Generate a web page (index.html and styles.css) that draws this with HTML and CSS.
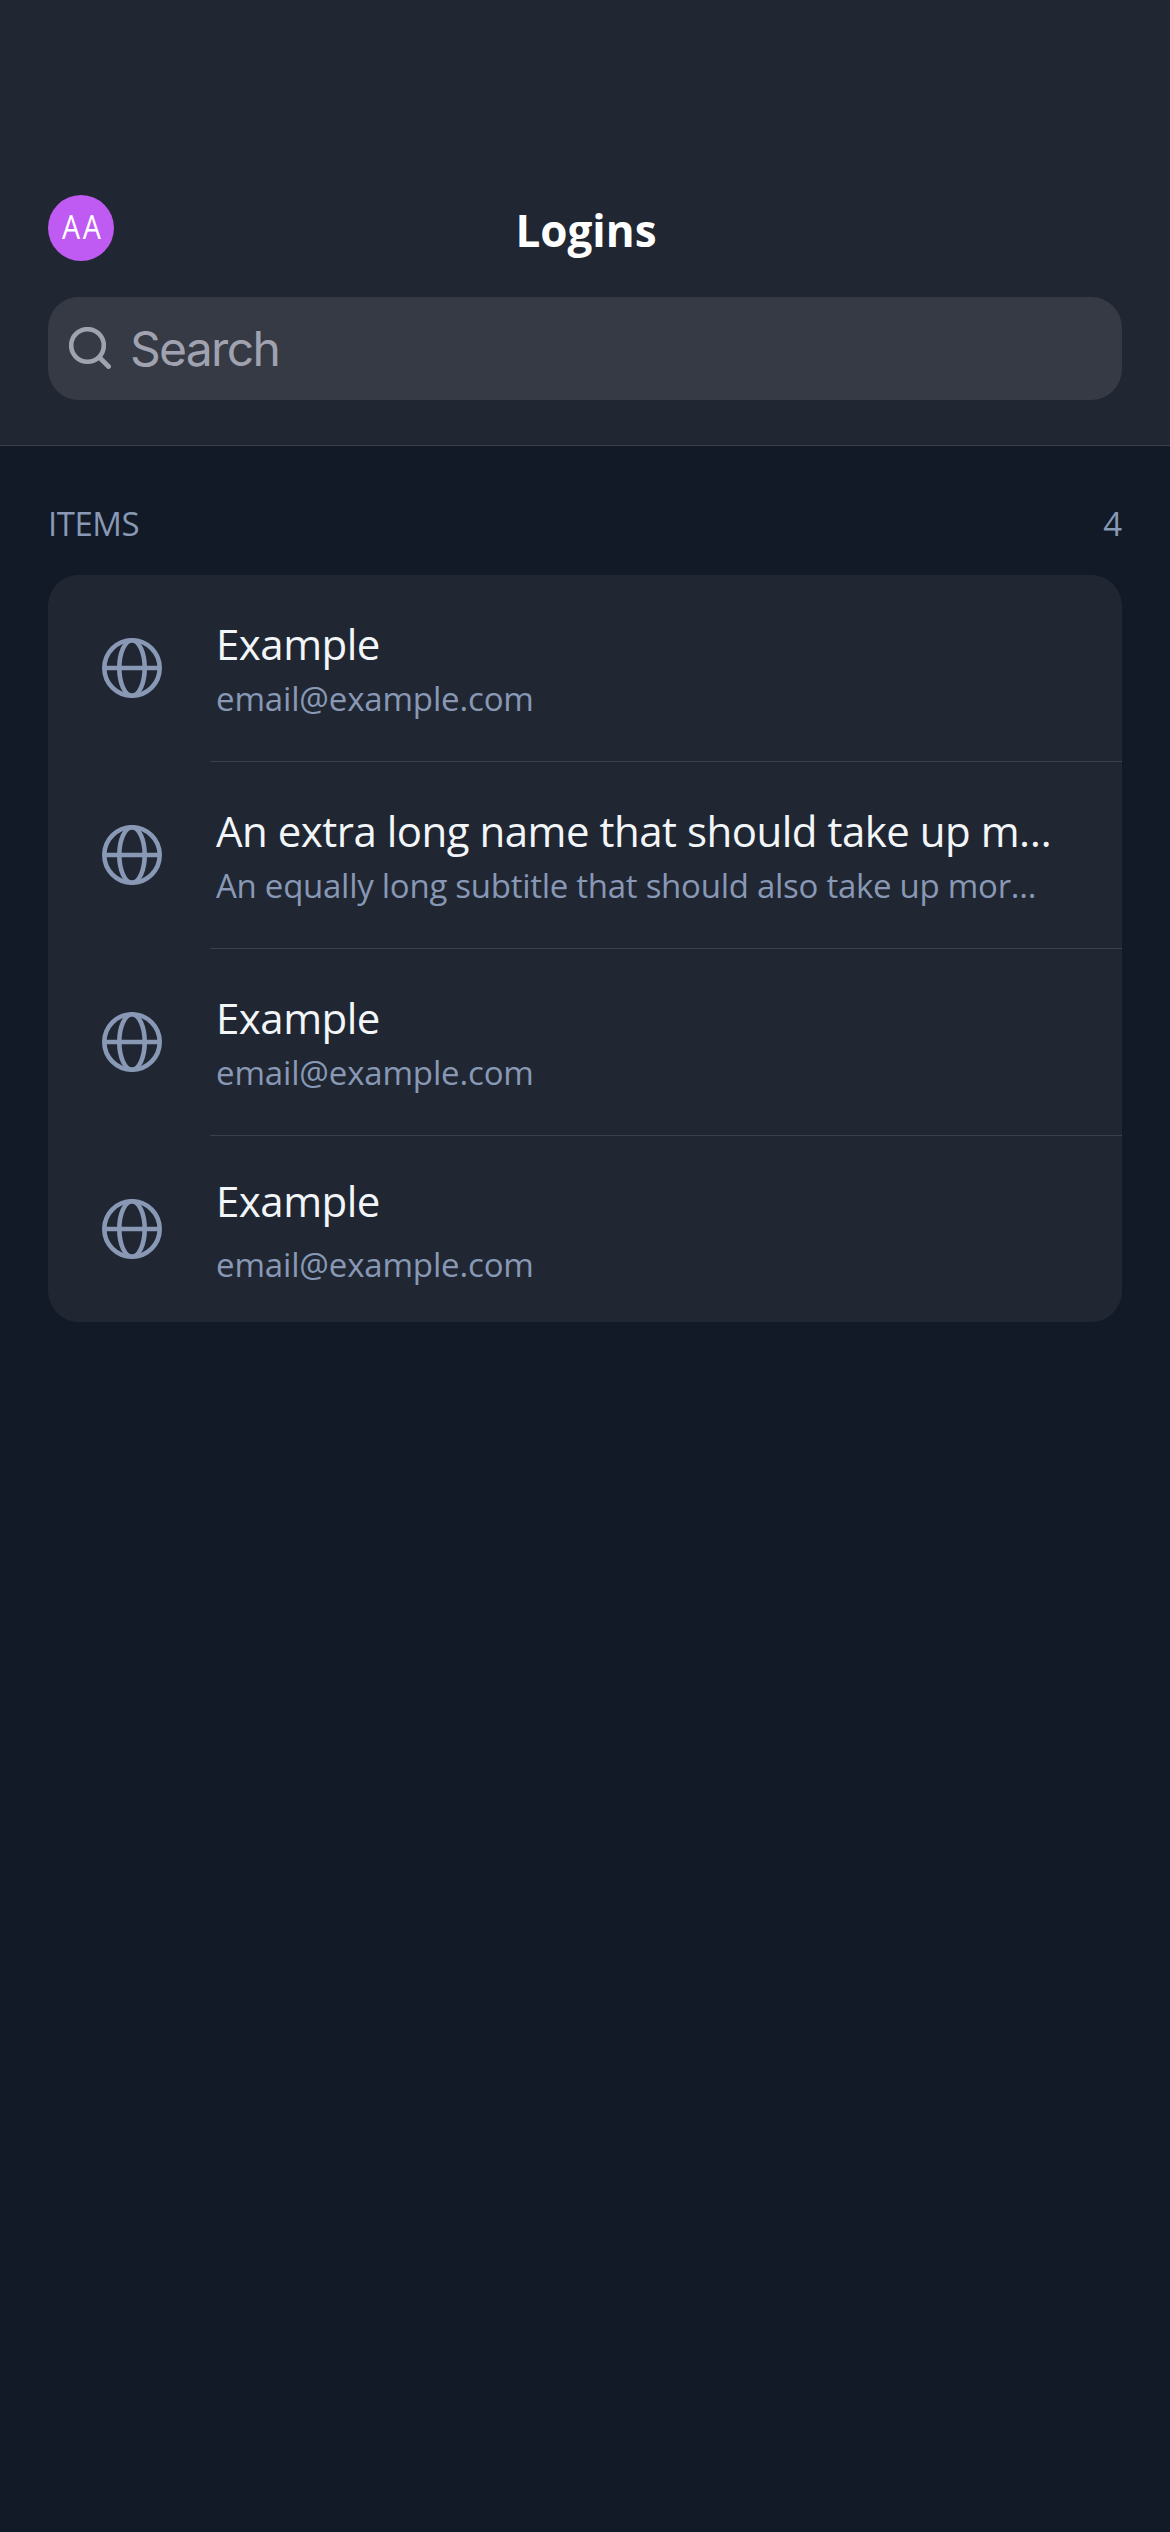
FILE: index.html
```html
<!DOCTYPE html>
<html lang="en">
<head>
<meta charset="utf-8">
<title>Logins</title>
<link rel="stylesheet" href="styles.css">
</head>
<body>
<svg class="defs" width="0" height="0" aria-hidden="true">
  <symbol id="globe" viewBox="0 0 60 60">
    <g fill="none" stroke="currentColor" stroke-width="4.6">
      <circle cx="30" cy="30" r="27.7"/>
      <ellipse cx="30" cy="30" rx="12.7" ry="27.7"/>
      <path d="M2.3 30h55.4"/>
    </g>
  </symbol>
</svg>
<header class="header">
  <div class="bar">
    <div class="avatar"><span class="initials">AA</span></div>
    <h1 class="title">Logins</h1>
  </div>
  <div class="search">
    <svg class="search-icon" viewBox="0 0 42 42" fill="none" stroke="currentColor" stroke-linecap="round">
      <circle cx="18.5" cy="18.5" r="16.3" stroke-width="4.6"/>
      <path d="M30.5 30.5L39.5 39.5" stroke-width="4.8"/>
    </svg>
    <span class="placeholder">Search</span>
  </div>
</header>
<main class="content">
  <div class="section">
    <span class="section-name">ITEMS</span><span>4</span>
  </div>
  <ul class="card">
    <li class="row">
      <svg class="globe"><use href="#globe"/></svg>
      <div class="info"><div class="name">Example</div><div class="sub">email@example.com</div></div>
    </li>
    <li class="row">
      <svg class="globe"><use href="#globe"/></svg>
      <div class="info"><div class="name">An extra long name that should take up m…</div><div class="sub long">An equally long subtitle that should also take up mor…</div></div>
    </li>
    <li class="row">
      <svg class="globe"><use href="#globe"/></svg>
      <div class="info"><div class="name">Example</div><div class="sub">email@example.com</div></div>
    </li>
    <li class="row last">
      <svg class="globe"><use href="#globe"/></svg>
      <div class="info"><div class="name">Example</div><div class="sub">email@example.com</div></div>
    </li>
  </ul>
</main>
</body>
</html>
```
FILE: styles.css
```css
* { box-sizing: border-box; }
body {
  margin: 0;
  min-height: 2532px;
  background: #121a27;
  color: #f3f6f9;
  font-family: "Open Sans", sans-serif;
  white-space: nowrap;
}
.defs { display: block; }
.header {
  height: 446px;
  padding: 195px 48px 0;
  background: #202733;
  border-bottom: 1px solid #3b404b;
}
.bar {
  display: grid;
  grid-template-columns: 66px 1fr 66px;
  height: 66px;
}
.avatar {
  border-radius: 50%;
  background: #bf5af2;
  color: #fff;
  font-size: 33px;
  line-height: 64px;
  text-align: center;
}
.initials {
  display: inline-block;
  transform: scaleX(.87);
  letter-spacing: 3px;
  margin-right: -3px;
}
.title {
  margin: 0;
  padding: 4px 0 0 2px;
  color: #fff;
  font-size: 44px;
  line-height: 62px;
  font-weight: 700;
  text-align: center;
}
.search {
  display: flex;
  align-items: center;
  gap: 19px;
  height: 103px;
  margin-top: 36px;
  padding-left: 21px;
  border-radius: 31px;
  background: #353a45;
  color: #a0a2b0;
}
.search-icon { width: 42px; height: 42px; margin-bottom: 2px; }
.placeholder { font: 48px/60px Inter, sans-serif; letter-spacing: -1.7px; }
.content { padding: 54px 48px 0; }
.section {
  display: flex;
  justify-content: space-between;
  height: 75px;
  color: #8898b5;
  font-size: 33px;
  line-height: 48px;
}
.section-name { letter-spacing: -.5px; }
.card {
  margin: 0;
  padding: 0;
  list-style: none;
  border-radius: 31px;
  background: #202733;
}
.row {
  display: flex;
  height: 187px;
  padding-left: 54px;
}
.globe {
  flex: none;
  width: 60px;
  height: 60px;
  margin: 63px 48px 0 0;
  color: #8898b5;
}
.info {
  flex: 1;
  padding: 42px 0 0 6px;
  border-bottom: 1px solid #3b404b;
}
.name { font-size: 42px; line-height: 54px; letter-spacing: -.5px; }
.sub {
  margin-top: 4px;
  color: #8898b5;
  font-size: 33px;
  line-height: 48px;
  letter-spacing: -.15px;
}
.sub.long { letter-spacing: -.27px; }
.last { height: 186px; }
.last .info { padding-top: 38px; border: 0; }
.last .sub { margin-top: 13px; }
```
